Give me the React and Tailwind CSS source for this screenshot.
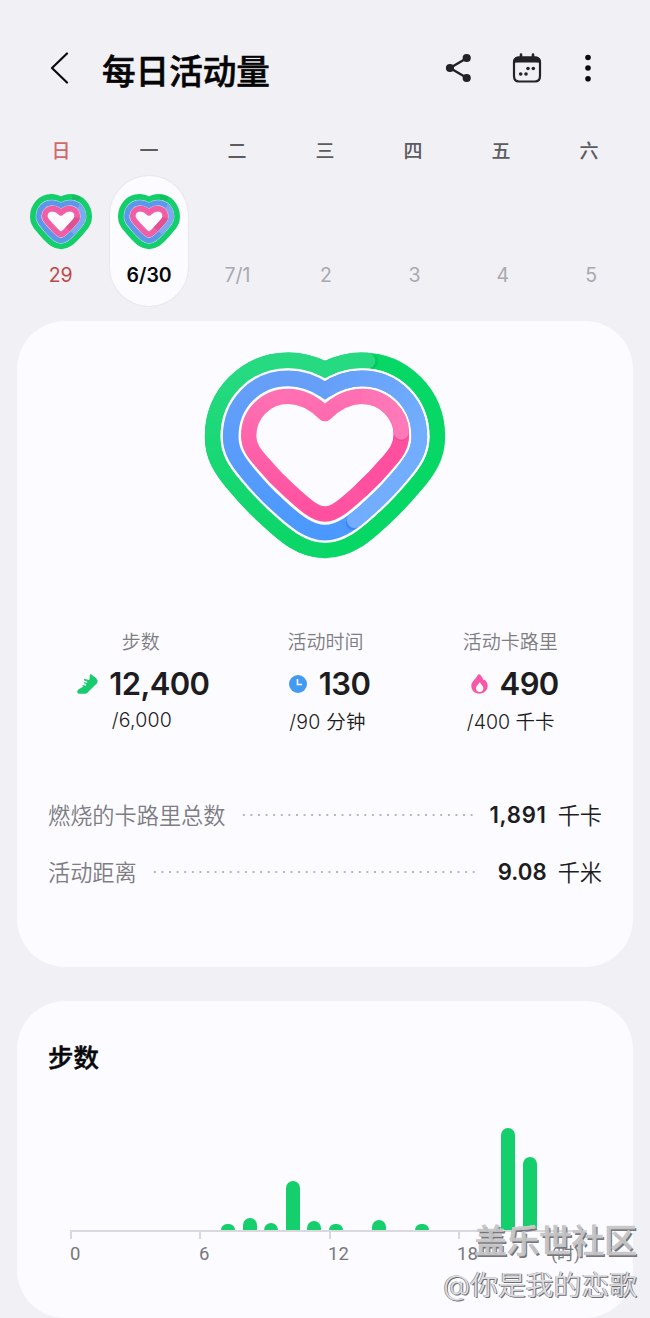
const weekdays = ['日', '一', '二', '三', '四', '五', '六'];
const dates = ['29', '6/30', '7/1', '2', '3', '4', '5'];

// steps per hour, in px above the axis
const bars = [0, 0, 0, 0, 0, 0, 0, 6, 12.5, 7, 49.5, 9.5, 6, 0, 10, 0, 6, 0, 0, 0, 102, 73, 0, 0];

function BigHeart() {
  const green = 'M390 88C425 71 460 61 500 61C627 61 727 163 727 290C727 346 704 387 660 437C632 470 605 500 573 529C510 588 462 631 390 631C318 631 270 588 207 529C175 500 148 470 120 437C76 387 53 346 53 290C53 163 153 61 280 61C320 61 355 71 390 88Z';
  const blue = 'M390 151C425 127 460 115 500 115C600 115 673 193 673 290C673 333 652 364 620 402C595 432 567 463 536 491C480 544 435 578 390 578C345 578 300 544 244 491C213 463 185 432 160 402C128 364 107 333 107 290C107 193 180 115 280 115C320 115 355 127 390 151Z';
  const pink = 'M390 221C425 187 460 169 500 169C568 169 619 223 619 287C619 319 603 340 577 369C552 399 525 427 497 452C450 495 420 522 390 522C360 522 330 495 283 452C255 427 228 399 203 369C177 340 161 319 161 287C161 223 212 169 280 169C320 169 355 187 390 221Z';
  return (
    <svg className="w-[260px] h-[230px]" viewBox="0 0 780 690" fill="none">
      <defs>
        <linearGradient id="g" gradientUnits="userSpaceOnUse" x1="0" y1="60" x2="0" y2="630">
          <stop offset="0" stopColor="#27da82" />
          <stop offset="1" stopColor="#0bd667" />
        </linearGradient>
        <linearGradient id="b" gradientUnits="userSpaceOnUse" x1="0" y1="115" x2="0" y2="578">
          <stop offset="0" stopColor="#669ff8" />
          <stop offset="1" stopColor="#4b99ff" />
        </linearGradient>
        <linearGradient id="b2" gradientUnits="userSpaceOnUse" x1="400" y1="115" x2="660" y2="290">
          <stop offset="0" stopColor="#659ff8" />
          <stop offset="1" stopColor="#73adff" />
        </linearGradient>
        <linearGradient id="p" gradientUnits="userSpaceOnUse" x1="0" y1="169" x2="0" y2="522">
          <stop offset="0" stopColor="#ff70b2" />
          <stop offset="1" stopColor="#ff509f" />
        </linearGradient>
        <linearGradient id="p2" gradientUnits="userSpaceOnUse" x1="460" y1="0" x2="600" y2="0">
          <stop offset="0" stopColor="#ff70b2" />
          <stop offset="1" stopColor="#ff78b7" />
        </linearGradient>
      </defs>
      <path d={green} stroke="#06d765" strokeWidth="47" />
      <circle cx="527" cy="64" r="23" fill="#02bb54" opacity=".45" />
      <path d="M390 631C318 631 270 588 207 529C175 500 148 470 120 437C76 387 53 346 53 290C53 163 153 61 280 61C320 61 355 71 390 88C425 71 460 61 500 61L518 62" stroke="url(#g)" strokeWidth="47" />
      <circle cx="517" cy="62" r="23.5" fill="#27da82" />

      <path d={blue} stroke="#fff" strokeWidth="61" />
      <path d={blue} stroke="url(#b)" strokeWidth="47" />
      <circle cx="473" cy="549" r="21" fill="#2e74d6" opacity=".45" />
      <path d="M390 151C425 127 460 115 500 115C600 115 673 193 673 290C673 333 652 364 620 402C595 432 567 463 536 491C516 510 498 526 480 541" stroke="url(#b2)" strokeWidth="47" />
      <circle cx="479" cy="541" r="23.5" fill="#73adff" />

      <path d={pink} stroke="url(#p)" strokeWidth="46" strokeLinejoin="round" />
      <path d="M619 280C619 319 603 340 577 369C552 399 525 427 497 452" stroke="#ff509f" strokeWidth="46" />
      <circle cx="619" cy="281" r="22" fill="#d92f7d" opacity=".4" />
      <path d="M500 169C568 169 619 223 619 276" stroke="url(#p2)" strokeWidth="46" />
      <circle cx="619" cy="276" r="23" fill="#ff78b7" />
    </svg>
  );
}

function SmallHeart() {
  const green = 'M153 107C162 100 172 98 183 98C213 98 237 124 237 157C237 174 231 183 221 194C214 203 207 211 199 219C183 235 171 246 153 246C135 246 123 235 107 219C99 211 92 203 85 194C75 183 69 174 69 157C69 124 93 98 123 98C134 98 144 100 153 107Z';
  const blue = 'M153 125C162 118 172 115.5 181 115.5C203 115.5 219.5 134 219.5 157C219.5 168 215 174 207 183C201 191 194 199 187 206C173 220 165 228.5 153 228.5C141 228.5 133 220 119 206C112 199 105 191 99 183C91 174 86.5 168 86.5 157C86.5 134 103 115.5 125 115.5C134 115.5 144 118 153 125Z';
  const pink = 'M153 145C162 136 170 133 179 133C192 133 202 143 202 156C202 163 199 167 194 172C188 180 181 187 174 194C165 204 159 210 153 210C147 210 141 204 132 194C125 187 118 180 112 172C107 167 104 163 104 156C104 143 114 133 127 133C136 133 144 136 153 145Z';
  return (
    <svg className="w-[62px] h-[56px]" viewBox="60 89 186 168" fill="none">
      <path d={green} stroke="#14cf69" strokeWidth="18" />
      <path d="M186 98C194 98 201 101 208 105" stroke="#0aae52" strokeWidth="16" opacity=".45" />
      <path d={blue} fill="#fafaff" stroke="#b9e4f0" strokeWidth="19" />
      <path d={blue} stroke="#5d97ea" strokeWidth="16" />
      <path d="M205 127C214 134 219.5 145 219.5 157C219.5 168 215 174 207 183C201 191 194 199 187 206" stroke="#7fa8f2" strokeWidth="16" />
      <path d={pink} stroke="#ecd0f2" strokeWidth="19" strokeLinejoin="round" />
      <path d={pink} stroke="#f05fa6" strokeWidth="17" strokeLinejoin="round" />
      <path d="M202 160C201 164 198 168 194 172C188 180 181 187 174 194" stroke="#e2508f" strokeWidth="17" />
    </svg>
  );
}

function ShoeIcon() {
  return (
    <svg className="w-[21px] h-[20px]" viewBox="0 0 63 60" fill="#18cc6d">
      <path d="M43 1C46 5 50 7 54 9C57 12 60 17 62 20C62 25 60 28 57 31L34 53C31 57 27 59 22 59H7C2 59 0 56 1 52C2 48 4 46 8 44L20 37L17 36C16 34 17 32 19 33L26 35L28 31L21 28C20 26 21 24 23 25L30 27L31 23L21 19C20 16 21 14 24 15L36 18C38 15 39 10 38 6C38 2 41 0 43 1Z" />
    </svg>
  );
}

function ClockIcon() {
  return (
    <svg className="w-[18px] h-[18px]" viewBox="0 0 18 18" fill="none">
      <circle cx="9" cy="9" r="9" fill="#429bf0" />
      <path d="M8.5 4V9.5H13" stroke="#fff" strokeWidth="1.6" />
    </svg>
  );
}

function FlameIcon() {
  return (
    <svg className="w-[17px] h-[20px]" viewBox="0 0 51 60">
      <path d="M23 1C25 0 27 1 29 4C33 9 36 14 38 19C40 17 42 17 44 20C48 25 51 31 50 37C49 50 39 59 25 59C11 59 1 49 1 36C1 25 9 18 15 11C18 7 20 3 23 1Z" fill="#f957a8" />
      <path d="M26 25C29 30 37 36 37 43C37 50 32 54 26 54C20 54 15 50 15 43C15 36 23 31 26 25Z" fill="#fff" />
    </svg>
  );
}

const stats = [
  { label: '步数', value: '12,400', goal: '/6,000', icon: <ShoeIcon />, row: 'gap-[11px] pl-[6px]', sub: 'pl-[3px] mt-[0px] tracking-[0.2px]' },
  { label: '活动时间', value: '130', goal: '/90 分钟', icon: <ClockIcon />, row: 'gap-[12px] pl-[9px]', sub: 'pl-[5px] mt-[2px] tracking-[0.2px]' },
  { label: '活动卡路里', value: '490', goal: '/400 千卡', icon: <FlameIcon />, row: 'gap-[12px] pl-[10px]', sub: 'pl-[2px] mt-[2px]' },
];

const totals = [
  { label: '燃烧的卡路里总数', value: '1,891', unit: '千卡', dots: 'ml-[14px] mr-[15px]', num: 'tracking-[0.7px]' },
  { label: '活动距离', value: '9.08', unit: '千米', dots: 'ml-[14px] mr-[18px]', num: '' },
];

export default function App() {
  return (
    <div className="relative w-[650px] h-[1318px] overflow-hidden bg-[#f1f0f5] text-[#1c1c21] font-['Inter','Noto_Sans_CJK_SC',sans-serif]">
      <header className="flex items-center h-[136px] pl-[50px] pr-[56px]">
        <svg className="w-[19px] h-[32px]" viewBox="0 0 19 32" fill="none" stroke="#0b0b0d" strokeWidth="2.2" strokeLinecap="round" strokeLinejoin="round">
          <path d="M17 1.5L2 16L17 30.5" />
        </svg>
        <h1 className="ml-[33px] mt-[8px] text-[33.6px] leading-[40px] font-medium [-webkit-text-stroke:0.6px] text-[#050506]">每日活动量</h1>
        <svg className="ml-auto w-[26px] h-[30px]" viewBox="0 0 26 30" fill="#222227">
          <path d="M22 5L5 15L22 25" fill="none" stroke="#222227" strokeWidth="2.4" />
          <circle cx="5" cy="15" r="4.1" />
          <circle cx="21.7" cy="5" r="4.1" />
          <circle cx="21.7" cy="25" r="4.1" />
        </svg>
        <svg className="ml-[41px] w-[30px] h-[30px]" viewBox="0 0 30 30" fill="none">
          <path d="M2 9C2 6 4 4.5 7 4.5H23C26 4.5 28 6 28 9V23C28 26.5 26 28.5 23 28.5H7C4 28.5 2 26.5 2 23Z" stroke="#222227" strokeWidth="2.2" />
          <path d="M1 10C1 6 3.5 3.5 7 3.5H23C26.5 3.5 29 6 29 10Q27 9.4 24 9.4H6Q3 9.4 1 10Z" fill="#222227" />
          <path d="M9 4.5V1.5M21 4.5V1.5" stroke="#222227" strokeWidth="2.6" strokeLinecap="round" />
          <g fill="#222227">
            <circle cx="16" cy="15.5" r="1.8" />
            <circle cx="21.3" cy="15.5" r="1.8" />
            <circle cx="8.7" cy="21" r="1.8" />
            <circle cx="14" cy="21" r="1.8" />
          </g>
        </svg>
        <svg className="ml-[40px] w-[12px] h-[28px]" viewBox="0 0 12 28" fill="#0b0b0d">
          <circle cx="6" cy="3.5" r="2.8" />
          <circle cx="6" cy="14" r="2.8" />
          <circle cx="6" cy="24.7" r="2.8" />
        </svg>
      </header>

      <div className="grid grid-cols-7 w-[616px] ml-[17px] h-[40px] pt-[2px] text-center text-[19px] leading-[28px] font-medium text-[#5b5b60]">
        {weekdays.map((d, i) => (
          <span key={d} className={i === 0 ? 'text-[#cf6a68]' : ''}>{d}</span>
        ))}
      </div>

      <div className="grid grid-cols-7 w-[619px] ml-[16.500px] h-[145px]">
        {dates.map((d, i) => (
          <div
            key={d}
            className={
              i === 1
                ? 'mx-auto flex flex-col items-center w-[78px] h-[130px] rounded-full bg-[#fcfbff] ring-1 ring-[#e8e7ec] pt-[18px]'
                : 'mx-auto flex flex-col items-center h-[130px] pt-[18px]'
            }
          >
            <div className="h-[56px]">{i < 2 && <SmallHeart />}</div>
            <span
              className={
                i === 0
                  ? 'mt-[13px] text-[19.5px] leading-[24px] text-[#bd4848]'
                  : i === 1
                    ? 'mt-[13px] text-[19.5px] leading-[24px] font-semibold text-[#08080a]'
                    : 'mt-[13px] text-[19.5px] leading-[24px] text-[#a9a9ae]'
              }
            >
              {d}
            </span>
          </div>
        ))}
      </div>

      <section className="mx-[17px] h-[646px] rounded-[48px] bg-[#fcfbff] pt-[19px] px-[31px]">
        <div className="flex justify-center">
          <BigHeart />
        </div>

        <div className="mt-[59px] grid grid-cols-3 h-[158px]">
          {stats.map(s => (
            <div key={s.label} className="flex flex-col items-center">
              <span className="pl-[1px] text-[19px] leading-[28px] font-[350] text-[#7d7d82]">{s.label}</span>
              <div className={`flex items-center h-[40px] mt-[7px] ${s.row}`}>
                {s.icon}
                <span className="text-[31px] leading-[40px] font-semibold tracking-[-0.6px]">{s.value}</span>
              </div>
              <span className={`text-[19.5px] leading-[32px] font-[350] ${s.sub}`}>{s.goal}</span>
            </div>
          ))}
        </div>

        {totals.map(t => (
          <div key={t.label} className="flex items-center h-[57px] text-[22.2px] leading-[32px]">
            <span className="font-[350] text-[#7d7d82]">{t.label}</span>
            <span className={`flex-1 h-[4px] -mt-[2px] bg-[radial-gradient(circle,#b4b4bb_1px,transparent_1.5px)] bg-[length:7.6px_4px] ${t.dots}`} />
            <span className={`-mt-px font-semibold ${t.num}`}>{t.value}</span>
            <span className="ml-[11px] font-[350]">{t.unit}</span>
          </div>
        ))}
      </section>

      <section className="mt-[34px] mx-[17px] h-[317px] rounded-[48px] bg-[#fcfbff] pt-[39px]">
        <h2 className="pl-[31px] text-[25.4px] leading-[36px] font-medium [-webkit-text-stroke:0.5px] text-[#08080a]">步数</h2>
        <div className="mt-[34px] ml-[53.500px] w-[517px] h-[120px] grid grid-cols-24 items-end">
          {bars.map((h, i) => (
            <div key={i} className="w-[14px] rounded-t-[7px] bg-[#14cf6c]" style={{ height: h }} />
          ))}
        </div>
        <div className="ml-[53px] w-[517px] h-[9px] border-t-2 border-[#d9d9dd] grid grid-cols-4">
          {[0, 6, 12, 18].map(h => (
            <div key={h} className="border-l-2 border-[#d9d9dd]" />
          ))}
        </div>
        <div className="relative ml-[53px] w-[516px] mt-[3px] grid grid-cols-4 text-[18.5px] leading-[24px] text-[#77777c] font-['Roboto','Noto_Sans_CJK_SC',sans-serif]">
          {[0, 6, 12, 18].map(h => (
            <span key={h}>{h}</span>
          ))}
          <span className="absolute right-[6px] top-0 text-[17px]">(时)</span>
        </div>
      </section>

      <div className="absolute right-[13px] top-[1220px] text-right whitespace-nowrap">
        <div className="text-[32.5px] leading-[44px] font-medium [-webkit-text-stroke:0.5px_#cfcfd2] text-[#d2d2d4]/80 [text-shadow:1.5px_1.5px_0_#77777a,-0.5px_-0.5px_0_#a5a5a8]">盖乐世社区</div>
        <div className="text-[27.8px] leading-[42px] font-[350] text-[#dedee0] [text-shadow:1px_1px_0_#6d6d71,-0.7px_-0.5px_0_#88888c]">@你是我的恋歌</div>
      </div>
    </div>
  );
}
